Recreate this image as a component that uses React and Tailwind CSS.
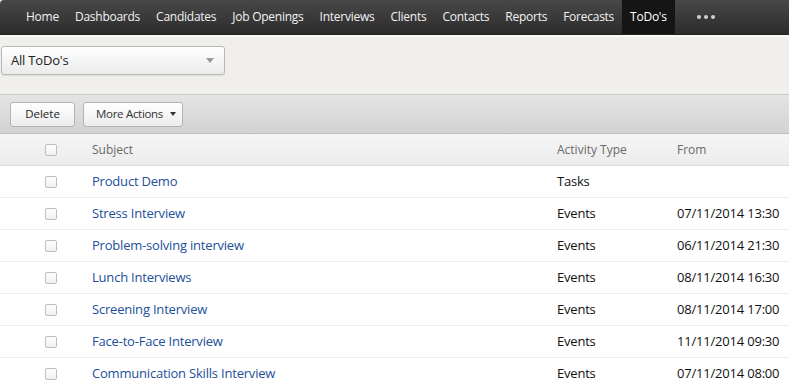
import React from 'react';

const navItems = [
  'Home', 'Dashboards', 'Candidates', 'Job Openings', 'Interviews',
  'Clients', 'Contacts', 'Reports', 'Forecasts', "ToDo's"
];

const rows = [
  { subject: 'Product Demo', type: 'Tasks', from: '' },
  { subject: 'Stress Interview', type: 'Events', from: '07/11/2014 13:30' },
  { subject: 'Problem-solving interview', type: 'Events', from: '06/11/2014 21:30' },
  { subject: 'Lunch Interviews', type: 'Events', from: '08/11/2014 16:30' },
  { subject: 'Screening Interview', type: 'Events', from: '08/11/2014 17:00' },
  { subject: 'Face-to-Face Interview', type: 'Events', from: '11/11/2014 09:30' },
  { subject: 'Communication Skills Interview', type: 'Events', from: '07/11/2014 08:00' },
];

const Checkbox = () => (
  <span className="block w-[12px] h-[12px] rounded-[2px] border border-[#bdbdbd] bg-gradient-to-b from-white to-[#f0f0f0]" />
);

export default function App() {
  return (
    <div className="w-[789px] h-[388px] overflow-hidden bg-[#f1efeb] text-[13px]" style={{ fontFamily: '"Open Sans", "Liberation Sans", sans-serif' }}>
      {/* top nav */}
      <div className="h-[35px] flex items-stretch pl-[18px] rounded-tl-[4px] bg-gradient-to-b from-[#484848] to-[#2c2c2c] border-b border-[#222]">
        {navItems.map((item) => (
          <div
            key={item}
            className={`flex items-center px-[8px] text-[12px] text-[#f2f2f2] font-medium tracking-[-0.25px] ${
              item === "ToDo's" ? 'bg-[#151515] text-white' : ''
            }`}
          >
            {item}
          </div>
        ))}
        <div className="flex items-center gap-[3px] ml-[22px]">
          <span className="w-[4px] h-[4px] rounded-full bg-[#d0d0d0]" />
          <span className="w-[4px] h-[4px] rounded-full bg-[#d0d0d0]" />
          <span className="w-[4px] h-[4px] rounded-full bg-[#d0d0d0]" />
        </div>
      </div>
      <div className="h-[2px] bg-[#fafaf8]" />

      {/* view selector */}
      <div className="pt-[9px] pl-[1px] h-[57px]">
        <div className="w-[224px] h-[29px] flex items-center justify-between pl-[9px] pr-[10px] rounded-[3px] border border-[#b9b9b9] bg-gradient-to-b from-white to-[#ebebeb] shadow-[0_1px_1px_rgba(0,0,0,0.08)]">
          <span className="text-[#222] tracking-[-0.2px]">All ToDo's</span>
          <span className="w-0 h-0 border-l-[4px] border-r-[4px] border-t-[5px] border-l-transparent border-r-transparent border-t-[#999]" />
        </div>
      </div>

      {/* toolbar */}
      <div className="h-[39px] flex items-center gap-[8px] pl-[10px] border-t border-[#c9c9c9] bg-gradient-to-b from-[#e4e4e4] to-[#d3d3d3]">
        <button className="h-[25px] w-[65px] rounded-[3px] border border-[#b3b3b3] bg-gradient-to-b from-white to-[#ececec] text-[11.5px] text-[#222]">
          Delete
        </button>
        <button className="h-[25px] w-[100px] flex items-center pl-[12px] gap-[7px] rounded-[3px] border border-[#b3b3b3] bg-gradient-to-b from-white to-[#ececec] text-[11.5px] text-[#333] tracking-[-0.3px]">
          More Actions
          <span className="w-0 h-0 border-l-[3px] border-r-[3px] border-t-[4px] border-l-transparent border-r-transparent border-t-[#333]" />
        </button>
      </div>

      {/* table */}
      <div className="bg-white">
        <div className="h-[33px] grid grid-cols-[92px_465px_120px_1fr] items-center border-t border-[#bdbdbd] border-b border-b-[#dcdcdc] bg-gradient-to-b from-[#f6f6f6] to-[#ececec] text-[12px] text-[#6a6a6a]">
          <div className="pl-[45px]"><Checkbox /></div>
          <div>Subject</div>
          <div>Activity Type</div>
          <div>From</div>
        </div>
        {rows.map((r) => (
          <div key={r.subject} className="h-[32px] grid grid-cols-[92px_465px_120px_1fr] items-center border-b border-[#ededed] tracking-[-0.2px]">
            <div className="pl-[45px]"><Checkbox /></div>
            <div className="text-[#1d4f9a]">{r.subject}</div>
            <div className="text-[#111]">{r.type}</div>
            <div className="text-[#111]">{r.from}</div>
          </div>
        ))}
      </div>
    </div>
  );
}
